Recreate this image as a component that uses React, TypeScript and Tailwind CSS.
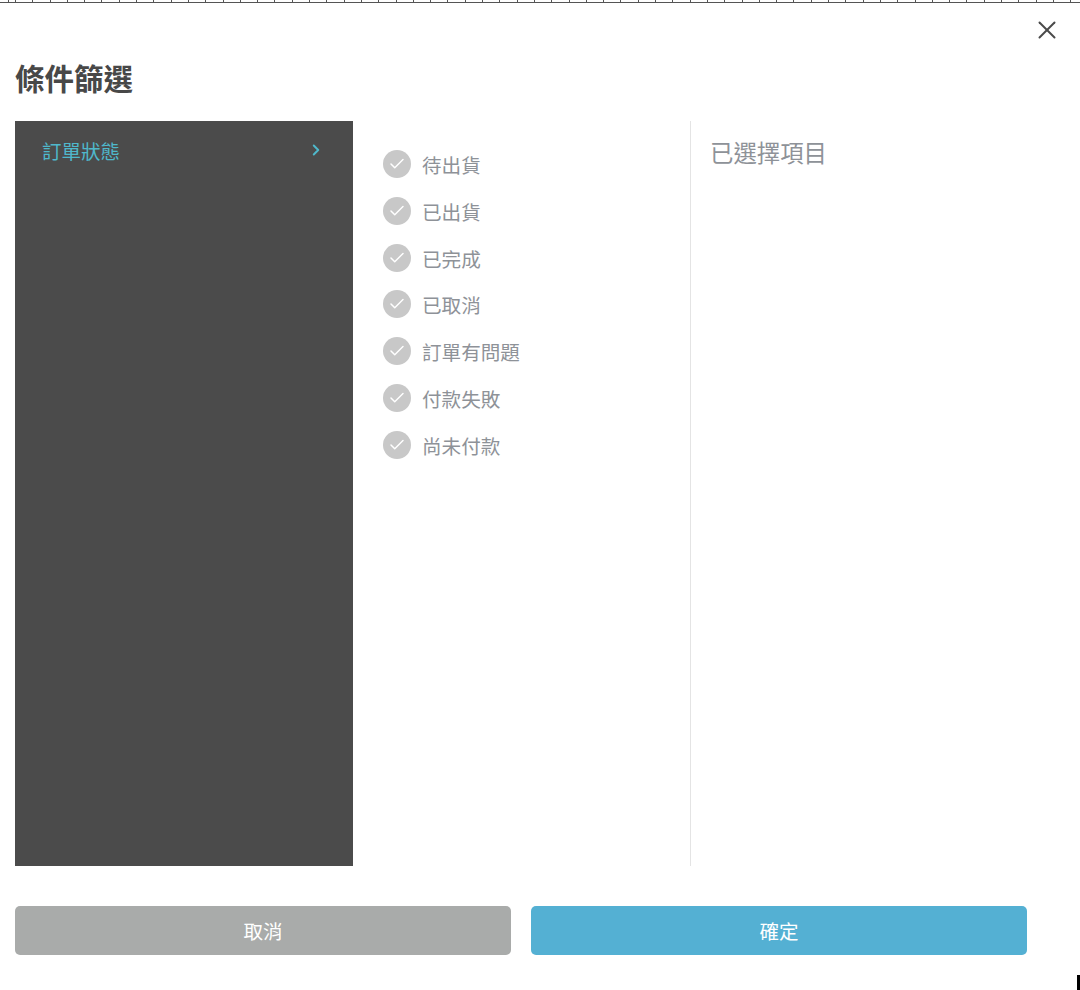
import { X, ChevronRight, Check } from "lucide-react";

const statuses = ["待出貨", "已出貨", "已完成", "已取消", "訂單有問題", "付款失敗", "尚未付款"];

const font = "font-['Noto_Sans_CJK_TC','Noto_Sans',sans-serif]";

export default function App() {
  return (
    <div className={`relative h-[990px] w-[1080px] overflow-hidden bg-white ${font}`}>
      {/* sliver of the page ruler behind the dialog */}
      <div className="h-[3px] w-full border-b border-[#555] bg-[repeating-linear-gradient(90deg,#555_0,#555_1px,transparent_1px,transparent_17.3px)] bg-[position:15px_0]" />

      <div className="flex h-[41px] justify-end pr-[18px] pt-[12px]">
        <X className="h-[30px] w-[30px] text-[#4a4a4a]" strokeWidth={1.6} />
      </div>

      <h1 className="ml-[15px] h-[77px] text-[29.5px] leading-[66px] font-bold text-[#484848]">條件篩選</h1>

      <div className="ml-[15px] flex h-[745px] w-[1012px]">
        <div className="w-[338px] shrink-0 bg-[#4b4b4b] px-[27px] pt-[15px]">
          <div className="flex items-center justify-between text-[#4fb8cb]">
            <span className="text-[19.5px] leading-[30px]">訂單狀態</span>
            <ChevronRight className="mt-[-2px] mr-[1px] h-[18px] w-[18px]" strokeWidth={2.6} />
          </div>
        </div>

        <ul className="flex w-[337px] shrink-0 flex-col gap-[16.8px] pl-[30px] pt-[28px]">
          {statuses.map((s) => (
            <li key={s} className="flex h-[30px] items-center gap-[11px]">
              <span className="flex h-[28px] w-[28px] items-center justify-center rounded-full bg-[#c8c8c8]">
                <Check className="h-[18px] w-[18px] text-white" strokeWidth={2} />
              </span>
              <span className="mt-[2px] text-[19.6px] leading-[30px] text-[#8e9298]">{s}</span>
            </li>
          ))}
        </ul>

        <div className="flex-1 border-l border-[#e4e4e4] pl-[19px] pt-[13px]">
          <span className="text-[23.4px] leading-[36px] text-[#8e9298]">已選擇項目</span>
        </div>
      </div>

      <div className="ml-[15px] mt-[40px] flex w-[1012px] gap-[20px]">
        <button className="h-[49px] flex-1 rounded-[5px] bg-[#a9abaa] pt-[1px] text-[19.5px] text-white">取消</button>
        <button className="h-[49px] flex-1 rounded-[5px] bg-[#54b0d3] pt-[1px] text-[19.5px] text-white">確定</button>
      </div>

      <div className="absolute bottom-0 right-0 h-[15px] w-[3px] bg-black" />
    </div>
  );
}
